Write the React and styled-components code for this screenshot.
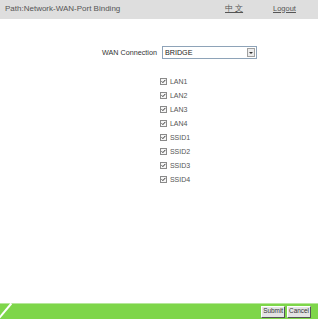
import React from "react";
import styled, { createGlobalStyle } from "styled-components";

const GlobalStyle = createGlobalStyle`
  html, body {
    margin: 0;
    padding: 0;
    background: #ffffff;
  }
  body {
    font-family: "Liberation Sans", Arial, sans-serif;
  }
`;

const ports = ["LAN1", "LAN2", "LAN3", "LAN4", "SSID1", "SSID2", "SSID3", "SSID4"];

function App() {
  return (
    <Page>
      <GlobalStyle />
      <Header>
        <PathText>Path:Network-WAN-Port Binding</PathText>
        <HeaderLinks>
          <HeaderLink href="#" $width="48px">中 文</HeaderLink>
          <HeaderLink href="#">Logout</HeaderLink>
        </HeaderLinks>
      </Header>

      <Content>
        <WanRow>
          <WanLabel>WAN Connection</WanLabel>
          <Select>
            <SelectText>BRIDGE</SelectText>
            <SelectArrow>
              <svg width="4" height="2" viewBox="0 0 4 2">
                <path d="M0 0 H4 L2 2 Z" fill="#333" />
              </svg>
            </SelectArrow>
          </Select>
        </WanRow>

        <PortList>
          {ports.map(p => (
            <PortRow key={p}>
              <CheckBox>
                <svg width="5" height="5" viewBox="0 0 5 5">
                  <path d="M0.6 2.3 L1.9 3.6 L4.4 0.9" stroke="#333" strokeWidth="1" fill="none" />
                </svg>
              </CheckBox>
              <PortLabel>{p}</PortLabel>
            </PortRow>
          ))}
        </PortList>
      </Content>

      <Footer>
        <Slash />
        <Buttons>
          <Button>Submit</Button>
          <Button>Cancel</Button>
        </Buttons>
      </Footer>
    </Page>
  );
}

export default App;

const Page = styled.div`
  width: 318px;
  height: 320px;
  display: flex;
  flex-direction: column;
  overflow: hidden;
`;

const Header = styled.div`
  height: 19px;
  background: #dedede;
  display: flex;
  align-items: center;
  justify-content: space-between;
  padding: 0 0 0 5px;
  box-sizing: border-box;
  font-size: 8px;
  color: #555;
`;

const PathText = styled.span`
  margin-top: -2px;
`;

const HeaderLinks = styled.div`
  display: flex;
  width: 93px;
  margin-top: -2px;
`;

const HeaderLink = styled.a`
  color: #555;
  text-decoration: underline;
  font-size: 7.5px;
  width: ${p => p.$width || "auto"};
`;

const Content = styled.div`
  flex: 1;
  display: flex;
  flex-direction: column;
  align-items: center;
`;

const WanRow = styled.div`
  display: flex;
  align-items: center;
  margin-top: 27px;
  margin-left: 41px;
  gap: 5px;
`;

const WanLabel = styled.span`
  font-size: 7.2px;
  color: #333;
`;

const Select = styled.div`
  width: 95px;
  height: 13px;
  box-sizing: border-box;
  border: 1px solid #8ea3b8;
  display: flex;
  align-items: center;
  justify-content: space-between;
  background: #fff;
  padding-right: 1px;
`;

const SelectText = styled.span`
  font-size: 7.2px;
  color: #222;
  padding-left: 2px;
`;

const SelectArrow = styled.span`
  width: 8px;
  height: 9px;
  box-sizing: border-box;
  background: #ececec;
  border: 1px solid #a0a0a0;
  display: flex;
  align-items: center;
  justify-content: center;
`;

const PortList = styled.div`
  display: flex;
  flex-direction: column;
  margin-top: 18px;
  margin-left: 32px;
  gap: 6.1px;
`;

const PortRow = styled.div`
  display: flex;
  align-items: center;
  gap: 3px;
  height: 8px;
`;

const CheckBox = styled.span`
  width: 7px;
  height: 7px;
  box-sizing: border-box;
  border: 1px solid #8a8a8a;
  background: #f6f6f6;
  display: flex;
  align-items: center;
  justify-content: center;
`;

const PortLabel = styled.span`
  font-size: 7px;
  color: #555;
`;

const Footer = styled.div`
  position: relative;
  height: 16px;
  margin-bottom: 1px;
  background: #7ed64a;
  border-top: 1px solid #b6e79a;
  display: flex;
  justify-content: flex-end;
  align-items: center;
  padding-right: 7px;
  box-sizing: border-box;
`;

const Slash = styled.span`
  position: absolute;
  left: 4px;
  top: -3px;
  width: 1.5px;
  height: 20px;
  background: #fff;
  transform: rotate(40deg);
`;

const Buttons = styled.div`
  display: flex;
  gap: 2px;
`;

const Button = styled.button`
  font-family: "Liberation Sans", Arial, sans-serif;
  font-size: 6.4px;
  color: #333;
  height: 12px;
  padding: 0 1px;
  background: #e4e4e4;
  border: 1px solid;
  border-color: #fff #555 #555 #fff;
  line-height: 1;
`;
